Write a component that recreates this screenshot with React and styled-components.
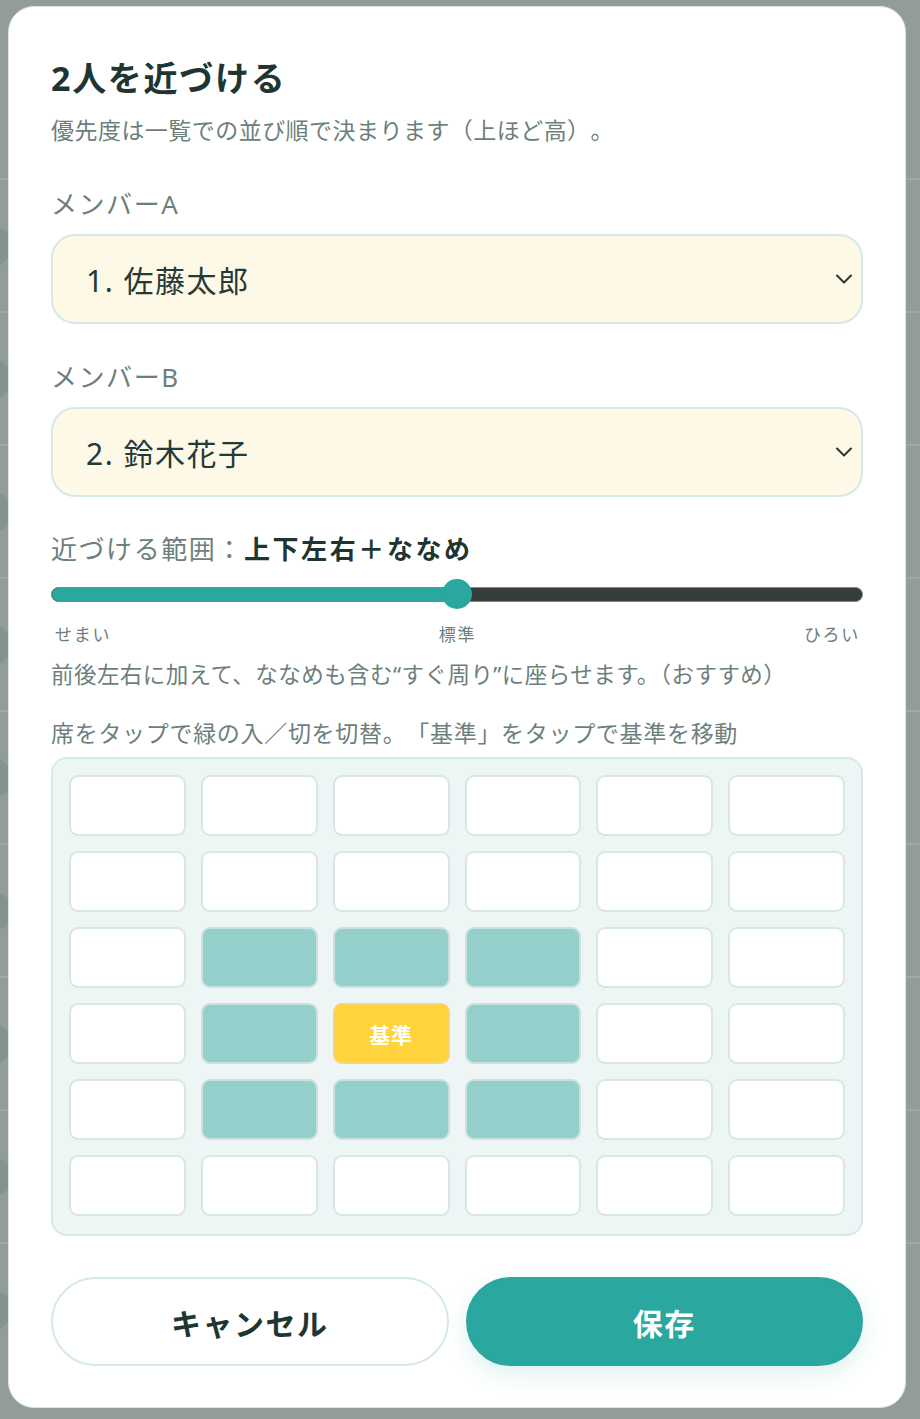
import React from 'react';
import styled, { createGlobalStyle } from 'styled-components';

const GlobalStyle = createGlobalStyle`
  html, body { margin: 0; padding: 0; }
  body {
    background: #939b9b;
    font-family: "Noto Sans", "Noto Sans CJK JP", sans-serif;
    text-spacing-trim: space-all;
  }
  * { box-sizing: border-box; }
`;

const Backdrop = styled.div`
  position: relative;
  min-height: 1419px;
  padding: 6px 14px 0 8px;
`;

const UnderPage = styled.div`
  position: absolute;
  inset: 0;
  padding-top: 178px;
  display: flex;
  flex-direction: column;
`;

const UnderRow = styled.div`
  height: 133px;
  border-top: 2px solid #a0a7a6;
  display: flex;
  align-items: center;
`;

const UnderAvatar = styled.div`
  width: 40px;
  height: 40px;
  margin-left: -28px;
  border-radius: 50%;
  background: #879190;
`;

const Modal = styled.div`
  position: relative;
  width: 898px;
  background: #ffffff;
  border: 1px solid #d4e7e4;
  border-radius: 26px;
  padding: 49px 42px 41px;
  display: flex;
  flex-direction: column;
`;

const Title = styled.h2`
  margin: 0;
  font-size: 34px;
  line-height: 44px;
  font-weight: 700;
  letter-spacing: 0.05em;
  color: #1f3532;
`;

const Subtitle = styled.p`
  margin: 14px 0 0;
  font-size: 23px;
  line-height: 32px;
  letter-spacing: 0.02em;
  color: #6d7f7c;
`;

const FieldLabel = styled.div`
  margin-top: ${(p) => p.$mt}px;
  font-size: 26px;
  line-height: 36px;
  letter-spacing: 0.06em;
  color: #6d7f7c;
`;

const Strong = styled.span`
  font-weight: 700;
  letter-spacing: 0.1em;
  color: #1f3532;
`;

const Select = styled.div`
  margin-top: 12px;
  height: 90px;
  border: 2px solid #d5e9e6;
  border-radius: 24px;
  background: #fef8e7;
  display: flex;
  align-items: center;
  justify-content: space-between;
  padding: 0 8px 0 33px;
  font-size: 30px;
  letter-spacing: 0.05em;
  color: #253936;
`;

const Chevron = () => (
  <svg width="18" height="12" viewBox="0 0 18 12" fill="none">
    <path d="M2 2.5 L9 9.5 L16 2.5" stroke="#2a3735" strokeWidth="2" strokeLinecap="round" strokeLinejoin="round" />
  </svg>
);

const SliderWrap = styled.div`
  margin-top: 12px;
  height: 30px;
  position: relative;
  display: flex;
  align-items: center;
`;

const Track = styled.div`
  width: 100%;
  height: 15px;
  border-radius: 8px;
  background: #363d3c;
  border: 1px solid #7b8886;
  overflow: hidden;
  display: flex;
`;

const Fill = styled.div`
  height: 100%;
  background: #2aa79e;
`;

const Thumb = styled.div`
  position: absolute;
  top: 0;
  width: 30px;
  height: 30px;
  margin-left: -15px;
  border-radius: 50%;
  background: #2aa79e;
`;

const Ticks = styled.div`
  margin-top: 15px;
  display: flex;
  justify-content: space-between;
  padding: 0 3px 0 4px;
  font-size: 17px;
  line-height: 22px;
  letter-spacing: 0.1em;
  color: #6d7f7c;
`;

const Note = styled.p`
  margin: ${(p) => p.$mt}px 0 0;
  font-size: ${(p) => (p.$trim ? 22.5 : 23)}px;
  line-height: 32px;
  letter-spacing: ${(p) => (p.$trim ? 0.02 : 0.03)}em;
  text-spacing-trim: ${(p) => (p.$trim ? 'normal' : 'space-all')};
  color: #6d7f7c;
  white-space: nowrap;
`;

const SeatGrid = styled.div`
  margin-top: 8px;
  background: #eef6f5;
  border: 2px solid #d5e9e6;
  border-radius: 16px;
  padding: 16px 16px 18px;
  display: grid;
  grid-template-columns: repeat(6, 1fr);
  grid-auto-rows: 61px;
  gap: 15px;
`;

const Seat = styled.div`
  border-radius: 9px;
  border: 2px solid ${(p) => (p.$kind === 'base' ? '#f7d66a' : p.$kind === 'on' ? '#c9e2df' : '#d5e8e5')};
  background: ${(p) => (p.$kind === 'base' ? '#fed33c' : p.$kind === 'on' ? '#95cfcc' : '#ffffff')};
  display: flex;
  align-items: center;
  justify-content: center;
  color: #ffffff;
  font-size: 21px;
  font-weight: 700;
  letter-spacing: 0.04em;
`;

const Actions = styled.div`
  margin-top: 41px;
  display: grid;
  grid-template-columns: 1fr 1fr;
  gap: 17px;
`;

const Button = styled.button`
  height: 89px;
  border-radius: 45px;
  font-family: inherit;
  font-size: 30px;
  font-weight: 700;
  letter-spacing: 0.05em;
  cursor: pointer;
  border: 2px solid ${(p) => (p.$primary ? '#2aa79f' : '#d5e9e6')};
  background: ${(p) => (p.$primary ? '#2aa79f' : '#ffffff')};
  color: ${(p) => (p.$primary ? '#ffffff' : '#1f3532')};
  box-shadow: ${(p) => (p.$primary ? '0 8px 22px rgba(42, 167, 159, 0.16)' : 'none')};
`;

const ROWS = 6;
const COLS = 6;
const BASE = { r: 3, c: 2 };

function seatKind(r, c) {
  if (r === BASE.r && c === BASE.c) return 'base';
  if (Math.abs(r - BASE.r) <= 1 && Math.abs(c - BASE.c) <= 1) return 'on';
  return 'off';
}

export default function App() {
  const value = 50;
  const seats = [];
  for (let r = 0; r < ROWS; r++) {
    for (let c = 0; c < COLS; c++) {
      const kind = seatKind(r, c);
      seats.push(
        <Seat key={`${r}-${c}`} $kind={kind}>
          {kind === 'base' ? '基準' : null}
        </Seat>
      );
    }
  }

  return (
    <>
      <GlobalStyle />
      <Backdrop>
        <UnderPage>
          {[0, 1, 2, 3, 4, 5, 6, 7, 8].map((i) => (
            <UnderRow key={i}>
              <UnderAvatar />
            </UnderRow>
          ))}
        </UnderPage>
        <Modal>
          <Title>2人を近づける</Title>
          <Subtitle>優先度は一覧での並び順で決まります（上ほど高）。</Subtitle>

          <FieldLabel $mt={40}>メンバーA</FieldLabel>
          <Select>
            <span>1. 佐藤太郎</span>
            <Chevron />
          </Select>

          <FieldLabel $mt={35}>メンバーB</FieldLabel>
          <Select>
            <span>2. 鈴木花子</span>
            <Chevron />
          </Select>

          <FieldLabel $mt={34}>
            近づける範囲：<Strong>上下左右＋ななめ</Strong>
          </FieldLabel>
          <SliderWrap>
            <Track>
              <Fill style={{ width: `${value}%` }} />
            </Track>
            <Thumb style={{ left: `${value}%` }} />
          </SliderWrap>
          <Ticks>
            <span>せまい</span>
            <span>標準</span>
            <span>ひろい</span>
          </Ticks>

          <Note $mt={13} $trim>前後左右に加えて、ななめも含む“すぐ周り”に座らせます。（おすすめ）</Note>
          <Note $mt={26}>席をタップで緑の入／切を切替。「基準」をタップで基準を移動</Note>

          <SeatGrid>{seats}</SeatGrid>

          <Actions>
            <Button>キャンセル</Button>
            <Button $primary>保存</Button>
          </Actions>
        </Modal>
      </Backdrop>
    </>
  );
}
